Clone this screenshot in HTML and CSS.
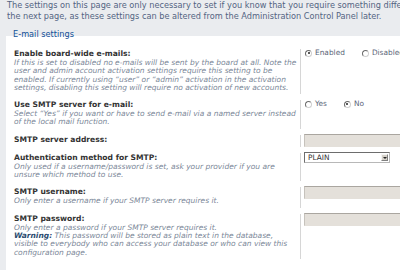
FILE: index.html
```html
<!DOCTYPE html>
<html lang="en">
<head>
    <meta charset="UTF-8">
    <title>E-mail settings</title>
    <link rel="stylesheet" href="styles.css">
</head>
<body>
    <div class="page">
        <p class="intro">The settings on this page are only necessary to set if you know that you require something different from the default. If unsure, just proceed to<br>the next page, as these settings can be altered from the Administration Control Panel later.</p>

        <fieldset class="settings">
            <legend>E-mail settings</legend>

            <dl class="row">
                <dt>
                    <label>Enable board-wide e-mails:</label>
                    <span class="explain">If this is set to disabled no e-mails will be sent by the board at all. Note the<br>user and admin account activation settings require this setting to be<br>enabled. If currently using “user” or “admin” activation in the activation<br>settings, disabling this setting will require no activation of new accounts.</span>
                </dt>
                <dd>
                    <label class="option"><span class="radio checked"></span>Enabled</label>
                    <label class="option"><span class="radio"></span>Disabled</label>
                </dd>
            </dl>

            <dl class="row">
                <dt>
                    <label>Use SMTP server for e-mail:</label>
                    <span class="explain">Select “Yes” if you want or have to send e-mail via a named server instead<br>of the local mail function.</span>
                </dt>
                <dd>
                    <label class="option"><span class="radio"></span>Yes</label>
                    <label class="option"><span class="radio checked"></span>No</label>
                </dd>
            </dl>

            <dl class="row">
                <dt>
                    <label>SMTP server address:</label>
                </dt>
                <dd>
                    <input type="text" class="field">
                </dd>
            </dl>

            <dl class="row">
                <dt>
                    <label>Authentication method for SMTP:</label>
                    <span class="explain">Only used if a username/password is set, ask your provider if you are<br>unsure which method to use.</span>
                </dt>
                <dd>
                    <div class="select"><span>PLAIN</span><span class="arrow"></span></div>
                </dd>
            </dl>

            <dl class="row">
                <dt>
                    <label>SMTP username:</label>
                    <span class="explain">Only enter a username if your SMTP server requires it.</span>
                </dt>
                <dd>
                    <input type="text" class="field">
                </dd>
            </dl>

            <dl class="row">
                <dt>
                    <label>SMTP password:</label>
                    <span class="explain">Only enter a password if your SMTP server requires it.<br><strong>Warning:</strong> This password will be stored as plain text in the database,<br>visible to everybody who can access your database or who can view this<br>configuration page.</span>
                </dt>
                <dd>
                    <input type="password" class="field">
                </dd>
            </dl>
        </fieldset>
    </div>
</body>
</html>
```

FILE: styles.css
```css
html, body {
    margin: 0;
    overflow: hidden;
}
body {
    background-color: #eaecef;
    font-family: "DejaVu Sans", Verdana, sans-serif;
    color: #333;
}
.page {
    width: 560px;
    padding: 0 0 0 6px;
}
.intro {
    margin: 0;
    padding: 0 0 0 1px;
    font-size: 8.2px;
    line-height: 10.5px;
    color: #536482;
    white-space: nowrap;
}
.settings {
    margin: 8px 0 0 0;
    padding: 6px 0 10px 0;
    border: none;
    background-color: #fff;
}
.settings legend {
    margin-left: 7px;
    padding: 0 0 4px 0;
    font-size: 8.2px;
    line-height: 10px;
    color: #115098;
}
.row {
    display: flex;
    margin: 0 0 6px 0;
}
.row dt {
    width: 286px;
    padding: 0 0 2px 8px;
    white-space: nowrap;
}
.row dt label {
    display: block;
    font-size: 7.6px;
    line-height: 10px;
    font-weight: bold;
    color: #333;
}
.explain {
    display: block;
    font-size: 7.5px;
    line-height: 8.3px;
    font-style: italic;
    color: #7b8798;
}
.explain strong {
    color: #2b4a70;
}
.row dd {
    display: flex;
    align-items: flex-start;
    margin: 0;
    padding: 0 0 0 3px;
    border-left: 1px solid #d6d6d6;
}
.option {
    display: flex;
    align-items: center;
    margin-right: 16px;
    font-size: 7.4px;
    line-height: 8px;
    color: #5a6577;
}
.radio {
    box-sizing: border-box;
    width: 7px;
    height: 7px;
    margin: 0 3px 0 1px;
    border: 1px solid;
    border-color: #6b6b6b #d0d0d0 #d0d0d0 #6b6b6b;
    border-radius: 50%;
    background: #fff;
    position: relative;
}
.radio.checked::after {
    content: "";
    position: absolute;
    left: 1.5px;
    top: 1.5px;
    width: 2px;
    height: 2px;
    border-radius: 50%;
    background: #222;
}
.field {
    box-sizing: border-box;
    width: 120px;
    height: 13px;
    margin: -1px 0 0 0;
    padding: 0;
    border: 1px solid;
    border-color: #aaa6a0 #e4e0da #e4e0da #c6c2bc;
    background-color: #e4e0da;
}
.select {
    box-sizing: border-box;
    display: flex;
    justify-content: space-between;
    align-items: center;
    width: 86px;
    height: 11px;
    margin-top: -1px;
    padding-left: 3px;
    border: 1px solid;
    border-color: #6d6d6d #b8b8b8 #b8b8b8 #6d6d6d;
    background: #fff;
    font-size: 7.4px;
    color: #333;
}
.arrow {
    box-sizing: border-box;
    width: 7px;
    height: 7px;
    margin-right: 1px;
    border: 1px solid;
    border-color: #f4f4f4 #808080 #808080 #f4f4f4;
    background: #d4d0c8;
    position: relative;
}
.arrow::after {
    content: "";
    position: absolute;
    left: 1px;
    top: 2px;
    border-left: 2px solid transparent;
    border-right: 2px solid transparent;
    border-top: 2px solid #222;
}
```
